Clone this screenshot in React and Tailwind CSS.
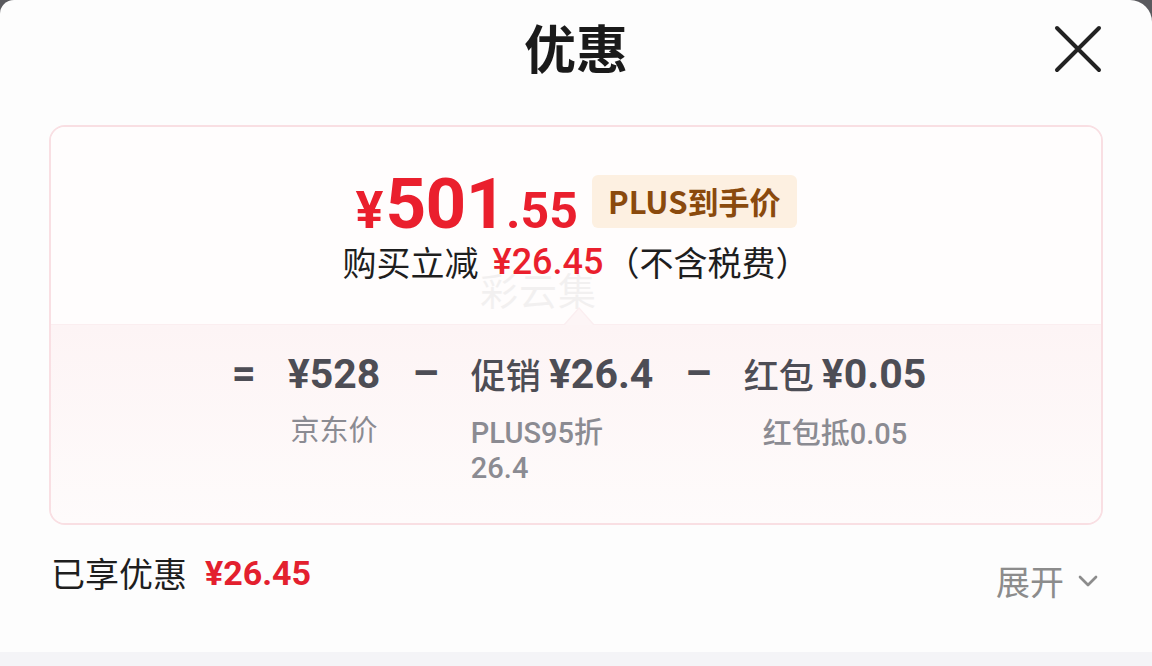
import { ChevronDown } from "lucide-react";

const cjk = "font-['Noto_Sans_CJK_SC','Noto_Sans',sans-serif]";
const num = "font-['Roboto','Noto_Sans_CJK_SC',sans-serif]";

function Op({ children }) {
  return (
    <div className={`${num} text-[42px] leading-[44px] font-bold text-[#4d4d55]`}>{children}</div>
  );
}

export default function App() {
  return (
    <div className="w-[1152px] h-[666px] bg-[#5a5a5e] overflow-hidden">
      <div className={`${cjk} h-full bg-[#fdfdfd] rounded-tl-[14px] rounded-tr-[22px] flex flex-col`}>
        {/* header */}
        <div className="relative h-[100px] flex items-center justify-center">
          <div className="text-[52px] font-bold text-[#1a1a1a] leading-none -mt-[6px]">优惠</div>
          <button className="absolute right-[50px] top-[25px] text-[#222]">
            <svg width="48" height="48" viewBox="0 0 48 48" fill="none" stroke="currentColor" strokeWidth="4" strokeLinecap="round">
              <path d="M3 3 45 45M45 3 3 45" />
            </svg>
          </button>
        </div>

        {/* card */}
        <div className="mx-[49px] mt-[25px] h-[400px] border-2 border-[#f9dfe3] rounded-[16px] overflow-hidden flex flex-col bg-white">
          <div className="relative h-[197px] flex flex-col items-center pt-[46px] bg-[#fffdfd]">
            <div className="flex items-center h-[56px]">
              <div className={`${num} text-[#ea1f2d] font-bold flex items-baseline leading-none mt-[4px]`}>
                <span className="text-[52px] mr-[2px]">¥</span>
                <span className="text-[71px] tracking-[-0.5px]">501</span>
                <span className="text-[50px]">.55</span>
              </div>
              <div className="ml-[14px] h-[53px] px-[16px] rounded-[6px] bg-[#fdf0e1] text-[#8a4a0d] text-[31px] font-bold flex items-center">
                PLUS到手价
              </div>
            </div>
            <div className="mt-[13px] flex items-center text-[34px] leading-[40px] text-[#1e1e1e]">
              <span>购买立减</span>
              <span className={`${num} ml-[14px] text-[36px] text-[#ea1f2d] font-medium`}>¥26.45</span>
              <span className="ml-[2px]">（不含税费）</span>
            </div>
            <div className="absolute left-[429px] top-[133px] text-[38px] text-[#1e1e1e] opacity-[0.05] tracking-[1px]">
              彩云集
            </div>
            {/* notch */}
            <div className="absolute left-[512px] bottom-[-1px] w-0 h-0 border-l-[16px] border-r-[16px] border-b-[18px] border-l-transparent border-r-transparent border-b-[#fbeef0]" />
            <div className="absolute left-[514px] bottom-[-1px] w-0 h-0 border-l-[14px] border-r-[14px] border-b-[16px] border-l-transparent border-r-transparent border-b-[#fdf5f6]" />
          </div>

          <div className="flex-1 border-t border-[#fbeef0] bg-gradient-to-b from-[#fdf4f5] to-[#fefbfb] flex justify-center pt-[27px] gap-[32px] pl-[6px]">
            <Op>=</Op>
            <div className="flex flex-col items-center">
              <div className={`${num} text-[41px] leading-[44px] font-bold text-[#4d4d55]`}>¥528</div>
              <div className="mt-[14px] text-[29px] leading-[36px] text-[#8b8b92]">京东价</div>
            </div>
            <Op>–</Op>
            <div className="flex flex-col items-start">
              <div className="flex items-center text-[#4d4d55] leading-[44px]">
                <span className="text-[35px] font-medium">促销</span>
                <span className={`${num} ml-[8px] text-[41px] font-bold`}>¥26.4</span>
              </div>
              <div className={`${num} mt-[20px] text-[29px] leading-[35px] text-[#8b8b92] font-medium w-[160px]`}>
                PLUS95折 26.4
              </div>
            </div>
            <Op>–</Op>
            <div className="flex flex-col items-center">
              <div className="flex items-center text-[#4d4d55] leading-[44px]">
                <span className="text-[35px] font-medium">红包</span>
                <span className={`${num} ml-[8px] text-[41px] font-bold`}>¥0.05</span>
              </div>
              <div className={`${num} mt-[20px] text-[29px] leading-[36px] text-[#8b8b92] font-medium`}>红包抵0.05</div>
            </div>
          </div>
        </div>

        {/* footer */}
        <div className="flex-1 flex items-start justify-between pl-[51px] pr-[48px] pt-[26px]">
          <div className="flex items-center leading-[44px]">
            <span className="text-[34px] text-[#1e1e1e]">已享优惠</span>
            <span className={`${num} ml-[18px] text-[34px] font-bold text-[#e3202e]`}>¥26.45</span>
          </div>
          <div className="flex items-center mt-[10px] text-[#8c8c8c]">
            <span className="text-[34px] leading-[40px]">展开</span>
            <ChevronDown size={32} strokeWidth={2} className="ml-[8px]" />
          </div>
        </div>
        <div className="h-[14px] bg-[#f4f4f7]" />
      </div>
    </div>
  );
}
